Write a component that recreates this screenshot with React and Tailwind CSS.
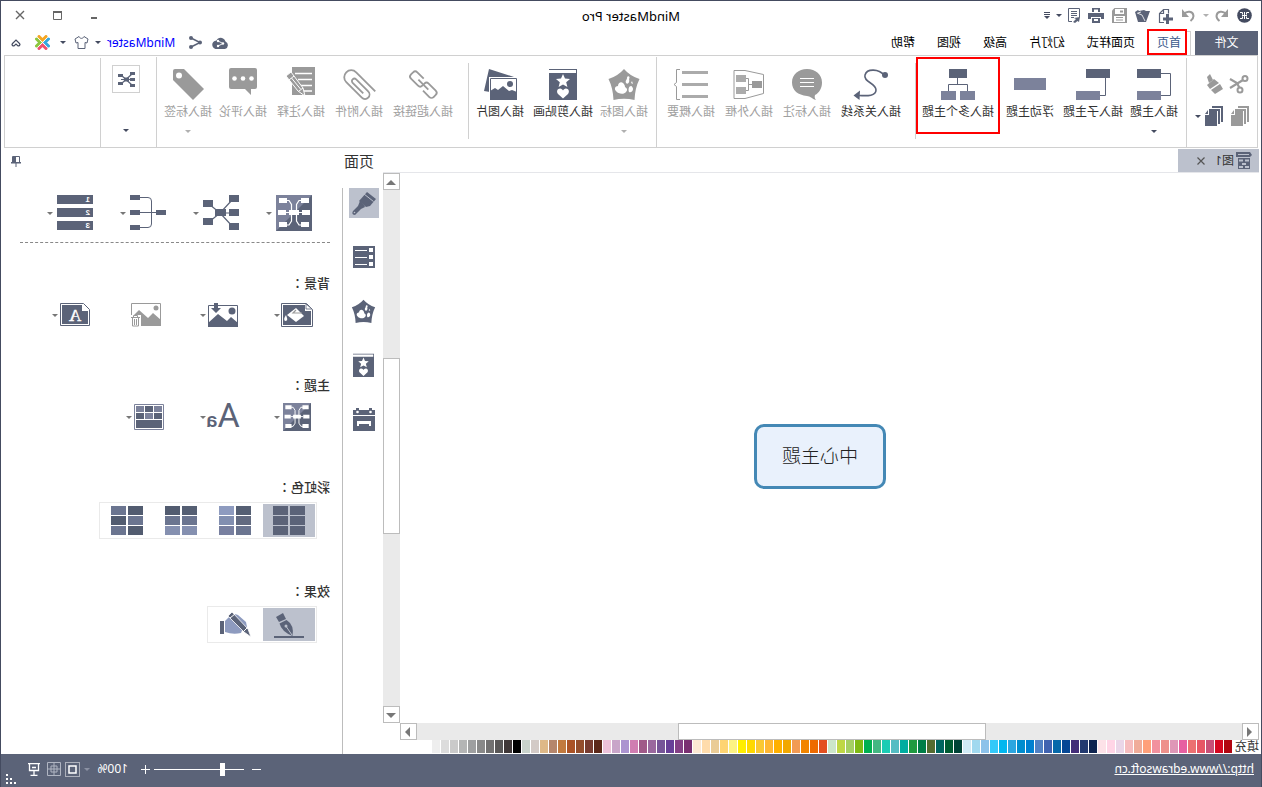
import React from 'react'

const DARK = '#5b6378'
const LIGHT = '#7c829b'
const GRAY = '#9a9a9a'

const swatches = [
  '#b20510', '#d6061f', '#c85077', '#e75565', '#ec7071', '#e75fa1', '#df97b7', '#ee918b', '#f2919e', '#ffa07a',
  '#f0ac99', '#f6bdbf', '#ead6e8', '#ffd5e6', '#fde2e8', '#0f2450', '#22396f', '#432d78', '#054795', '#0669aa',
  '#4063b0', '#5181c4', '#0080d0', '#008dcf', '#2ca6e0', '#00b7ef', '#33c9f9', '#8cc2ea', '#a1d9ef', '#d0ebf5',
  '#004437', '#005c32', '#00655f', '#556b2f', '#007e47', '#1f9a3f', '#00ada0', '#54bdc3', '#1bccb4', '#43b882',
  '#00b050', '#7fba14', '#a5cf63', '#bfd745', '#cce6c9', '#e35020', '#ee6a00', '#f28500', '#f29b54', '#f2a800',
  '#ffb000', '#ffb732', '#fac832', '#ffd900', '#ffee00', '#fdf383', '#fed472', '#eacc97', '#ffdcac', '#fde9d3',
  '#7a3072', '#844086', '#684098', '#765598', '#9a689e', '#a05988', '#d07db1', '#ac94d0', '#c9a5c9', '#edc2da',
  '#5c2819', '#783c30', '#944e2c', '#ab5326', '#c27a3e', '#b5866c', '#deb887', '#d3cac6', '#c9d3cb', '#000000',
  '#403838', '#595757', '#727171', '#898989', '#9e9fa0', '#b4b5b5', '#cacaca', '#dcdcdc', '#eeeeee',
]

const tabs = ['页面样式', '幻灯片', '高级', '视图', '帮助']

function Svg({ w = 36, h = 34, children, ...rest }) {
  return (
    <svg width={w} height={h} viewBox={`0 0 ${w} ${h}`} fill="none" className="shrink-0" aria-hidden="true" {...rest}>
      {children}
    </svg>
  )
}

function Caret({ color = '#444b60' }) {
  return (
    <svg width="6" height="3" viewBox="0 0 6 3" className="shrink-0" aria-hidden="true">
      <path d="M0 0h6L3 3z" fill={color} />
    </svg>
  )
}

/* ribbon icons */

const TopicIcon = () => (
  <Svg>
    <path d="M11 6.500H1.500v22H11" stroke={DARK} />
    <path d="M11 2h24v9H11z" fill={DARK} />
    <path d="M11 24h24v9H11z" fill={LIGHT} />
  </Svg>
)

const SubTopicIcon = () => (
  <Svg>
    <path d="M5.500 11v17.500H11" stroke={DARK} />
    <path d="M1 2h24v9H1z" fill={DARK} />
    <path d="M11 24h24v9H11z" fill={LIGHT} />
  </Svg>
)

const FloatIcon = () => (
  <Svg>
    <path d="M2 11h32v12H2z" fill={LIGHT} />
  </Svg>
)

const MultiIcon = () => (
  <Svg>
    <path d="M18.500 11v6M8.500 24v-6.500h19V24" stroke={DARK} />
    <path d="M9 2h18v9H9z" fill={DARK} />
    <path d="M1 24h15v9H1zM20 24h15v9H20z" fill={LIGHT} />
  </Svg>
)

const RelationIcon = () => (
  <Svg>
    <path d="M5 8C10 2 22 1 24 8c2 7-11 8-11 15 0 6 8 6 17 5.500" stroke={DARK} strokeWidth="1.600" />
    <circle cx="4" cy="8" r="3" fill={DARK} />
    <path d="M29 23.500l6.500 5-6 4.500z" fill={DARK} />
  </Svg>
)

const CalloutIcon = () => (
  <Svg>
    <path d="M18 2c8.500 0 15 5.500 15 13.500S27 28 18 29c-3 0-6 3.500-9 4 1.500-1.500 1.500-3.500 1-5C6 26 3 21.500 3 15.500 3 7.500 9.500 2 18 2z" fill={GRAY} />
    <path d="M11 11.500h14M11 15.500h14M11 19.500h14" stroke="#fff" />
  </Svg>
)

const BoundaryIcon = () => (
  <Svg>
    <path d="M33 3.500H22L3.500 7.500v19l18.500 5h11z" stroke={GRAY} />
    <path d="M15 17.500h3.500M22 11.500h-3.500v12H22" stroke={GRAY} />
    <path d="M5 14h10v7H5z" fill={GRAY} />
    <path d="M21 8h10v7H21zM21 20h10v7H21z" fill="#ababab" />
  </Svg>
)

const SummaryIcon = () => (
  <Svg>
    <path d="M1 4h26v3H1zM1 16h26v3H1zM1 28h26v3H1z" fill="#ababab" />
    <path d="M29 2.500h3.500v13l2.500 2-2.500 2v13H29" stroke={GRAY} />
  </Svg>
)

function Pentagon({ color, w = 36, h = 34 }) {
  return (
    <svg width={w} height={h} viewBox="0 0 36 34" className="shrink-0" aria-hidden="true">
      <path d="M18 2q6 7 15.500 10-4.500 9-5 21-10.500-2.500-21 0Q7 21 2.500 12 12 9 18 2z" fill={color} />
      <path d="M19 16c2-2 5 0 5 3 3 0 4 3 2 5-2 3-8 4-10 1-2-2-1-4 1-5 0-2 1-3 2-4z" fill="#fff" />
      <path d="M13 12c-2-3 2-4 2-1 0 2 2 2 1 5-2 2-4-1-3-4zM11 19c2 0 3 3 2 6-2 1-4-1-4-3 0-1 1-3 2-3zM9 17l1-3 1 2z" fill="#fff" />
    </svg>
  )
}

function ClipArt({ color, w = 36, h = 34 }) {
  return (
    <svg width={w} height={h} viewBox="0 0 36 34" className="shrink-0" aria-hidden="true">
      <path d="M4 2h28v31H4z" fill={color} />
      <path d="M5 3h27v3H5z" fill="#fff" />
      <path d="M18 7l2 4.600 5 .400-3.800 3.300 1.200 4.800L18 17.500 13.600 20l1.200-4.800L11 12l5-.400z" fill="#fff" />
      <path d="M18 31.500l-5-4.500c-2-2.500-.500-5.500 2-5.500 1.500 0 2.500 1 3 2 .500-1 1.500-2 3-2 2.500 0 4 3 2 5.500z" fill="#fff" />
    </svg>
  )
}

const PictureIcon = () => (
  <Svg>
    <path d="M4 10L29 2l5 22-6 1V10z" fill={DARK} />
    <path d="M1 10h28v24H1z" fill="#fff" />
    <path d="M1.500 11.500h26v21h-26z" stroke={DARK} />
    <path d="M1 33V25l5-2 3 1 6-5 5 4 3-2 5 3v9z" fill={DARK} />
    <circle cx="8" cy="17" r="3" fill={DARK} />
  </Svg>
)

const LinkIcon = () => (
  <Svg>
    <g transform="rotate(-45 18 18)" stroke={GRAY} strokeWidth="1.800">
      <path d="M14 22H5a3 3 0 0 1-3-3v-3a3 3 0 0 1 3-3h10a3 3 0 0 1 3 3v1" />
      <path d="M22 13h9a3 3 0 0 1 3 3v3a3 3 0 0 1-3 3H21a3 3 0 0 1-3-3v-1" />
      <path d="M11 17.500h14" />
    </g>
  </Svg>
)

const AttachIcon = () => (
  <Svg>
    <g transform="rotate(45 18 18)" stroke={GRAY} strokeWidth="1.800">
      <path d="M11 34V7a7 7 0 0 1 14 0v22a4.500 4.500 0 0 1-9 0V12a2.500 2.500 0 0 1 5 0v15" />
    </g>
  </Svg>
)

const NoteIcon = () => (
  <Svg>
    <path d="M4 0h23v28H4z" fill={GRAY} />
    <path d="M7 6.500h17M7 12.500h14M7 18.500h11M7 24h8" stroke="#fff" strokeWidth="1.300" />
    <path d="M28 5l5 4-12 15-7 5 2-8z" fill={GRAY} stroke="#fff" />
    <path d="M25 9l5 4M16 21l4 3M27.500 11l-9 11" stroke="#fff" />
  </Svg>
)

const CommentIcon = () => (
  <Svg>
    <path d="M6 1h24q2 0 2 2v17q0 2-2 2H16l-6 6v-6H6q-2 0-2-2V3q0-2 2-2z" fill={GRAY} />
    <circle cx="9.500" cy="11.500" r="2.300" fill="#fff" />
    <circle cx="18" cy="11.500" r="2.300" fill="#fff" />
    <circle cx="26.500" cy="11.500" r="2.300" fill="#fff" />
  </Svg>
)

const TagIcon = () => (
  <Svg>
    <path d="M22 2h9q2 0 2 2v9L13 33 2 22z" fill={GRAY} />
    <circle cx="27" cy="8.500" r="3" fill="#fff" />
  </Svg>
)

const ribbonGroups = [
  {
    className: 'pl-1 w-[271px]',
    items: [
      { label: '插入主题', icon: <TopicIcon />, width: 'w-[56px]', caret: true },
      { label: '插入子主题', icon: <SubTopicIcon />, width: 'w-[66px]' },
      { label: '浮动主题', icon: <FloatIcon />, width: 'w-[60px]' },
      { label: '插入多个主题', icon: <MultiIcon />, width: 'w-[84px]', marked: true },
    ],
  },
  {
    className: 'pl-[9px] w-[259px]',
    items: [
      { label: '插入关系线', icon: <RelationIcon />, width: 'w-[70px]' },
      { label: '插入标注', icon: <CalloutIcon />, width: 'w-[58px]', off: true },
      { label: '插入外框', icon: <BoundaryIcon />, width: 'w-[58px]', off: true },
      { label: '插入概要', icon: <SummaryIcon />, width: 'w-[58px]', off: true },
    ],
  },
  {
    className: 'pl-[3px] w-[188px]',
    items: [
      { label: '插入图标', icon: <Pentagon color={GRAY} />, width: 'w-[58px]', off: true, caret: true },
      { label: '插入剪贴画', icon: <ClipArt color={DARK} />, width: 'w-[64px]' },
      { label: '插入图片', icon: <PictureIcon />, width: 'w-[62px]' },
    ],
  },
  {
    className: 'pl-2.5 w-[312px]',
    items: [
      { label: '插入超链接', icon: <LinkIcon />, width: 'w-[70px]', off: true },
      { label: '插入附件', icon: <AttachIcon />, width: 'w-[58px]', off: true },
      { label: '插入注释', icon: <NoteIcon />, width: 'w-[58px]', off: true },
      { label: '插入评论', icon: <CommentIcon />, width: 'w-[58px]', off: true },
      { label: '插入标签', icon: <TagIcon />, width: 'w-[52px]', off: true, caret: true },
    ],
  },
]

function RibbonItem({ label, icon, width, off, marked, caret }) {
  return (
    <button
      disabled={off}
      className={`${width} ${marked ? 'border-2 border-[#ff0000] h-[77px] pt-2' : 'h-[86px] pt-2.5'} ${off ? 'text-[#a0a0a0]' : 'text-[#333333]'} shrink-0 flex flex-col items-center text-xs whitespace-nowrap`}
    >
      {icon}
      <span className="leading-4 mt-[3px]">{label}</span>
      {caret && <span className="mt-2.5 flex"><Caret color={off ? '#b0b0b0' : '#444b60'} /></span>}
    </button>
  )
}

function TitleBar() {
  return (
    <div className="h-[29px] shrink-0 grid grid-cols-3 items-center">
      <div className="flex items-center pl-[9px]">
        <Svg w={15} h={15}>
          <circle cx="7.500" cy="7.500" r="7.300" fill="#444b60" />
          <path d="M7.500 4v7M5 7.500h5M3 4.500h2.500v2M3 10.500h2.500v-2M12 4.500H9.500v2M12 10.500H9.500v-2" stroke="#fff" />
        </Svg>
        <button aria-label="撤销" className="ml-2">
          <Svg w={14} h={13}>
            <path d="M3 5C6 1.500 12 2 12.500 7c0 2-1 3.500-3 5" stroke={GRAY} strokeWidth="2" />
            <path d="M1 0v8h7z" fill={GRAY} />
          </Svg>
        </button>
        <span className="ml-1.5"><Caret color="#b0b0b0" /></span>
        <button aria-label="恢复" className="ml-2">
          <Svg w={14} h={13}>
            <path d="M11 5C8 1.500 2 2 1.500 7c0 2 1 3.500 3 5" stroke={GRAY} strokeWidth="2" />
            <path d="M13 0v8H6z" fill={GRAY} />
          </Svg>
        </button>
        <button aria-label="新建" className="ml-2">
          <Svg w={15} h={16}>
            <path d="M9 14.500h4.500v-9l-4-4h-5v4M9.500 1.500v4h4" stroke={DARK} strokeWidth="1.200" />
            <path d="M4 6h3v3.500h3v3H7V16H4v-3.500H0v-3h4z" fill={DARK} />
          </Svg>
        </button>
        <button aria-label="打开" className="ml-2">
          <Svg w={15} h={14}>
            <path d="M0 2h4l2-1 5 1 1-1 3 2-3 10H4z" fill={DARK} />
            <path d="M5 12l3-6 5-2M9 3l3 1" stroke="#fff" strokeWidth=".8" />
          </Svg>
        </button>
        <button aria-label="保存" className="ml-2">
          <Svg w={15} h={15}>
            <path d="M0 0h12.500L15 2.500V15H0z" fill={GRAY} />
            <path d="M3 1h9v5H3zM2 8h11v6H2z" fill="#fff" />
            <path d="M4 2.500h3v2H4z" fill={GRAY} />
            <path d="M4 9.500h7M4 12h7" stroke={GRAY} />
          </Svg>
        </button>
        <button aria-label="打印" className="ml-2">
          <Svg w={16} h={15}>
            <path d="M4 0h8v4H4zM0 5h16v6h-3V9H3v2H0zM4 10h8v5H4z" fill={DARK} />
            <path d="M6 11h4v2H6zM6 1.500h4V5H6z" fill="#fff" />
          </Svg>
        </button>
        <button aria-label="导出" className="ml-2">
          <Svg w={12} h={15}>
            <path d="M.500.500h11v13H8M.500.500v9" stroke={DARK} />
            <path d="M3 3.500h6M3 5.500h6M3 7.500h6M6 9.500h3" stroke={DARK} />
            <path d="M7 14L4 11l2-1-6-1 1 5 1.500-1L5 15z" fill={DARK} />
          </Svg>
        </button>
        <span className="ml-1.5"><Caret /></span>
        <button aria-label="自定义" className="ml-1.5">
          <Svg w={6} h={7}>
            <path d="M0 .500h6M0 2.500h6" stroke="#444b60" />
            <path d="M0 4h6L3 7z" fill="#444b60" />
          </Svg>
        </button>
      </div>
      <h1 className="text-center text-[13px] leading-4 text-black">MindMaster Pro</h1>
      <div className="flex items-center justify-end gap-7 pr-3.5">
        <button aria-label="最小化">
          <Svg w={7} h={10}><path d="M0 6h6v2H0z" fill="#666" /></Svg>
        </button>
        <button aria-label="最大化">
          <Svg w={9} h={10}><path d="M.500.500h8v8h-8z" stroke="#666" /><path d="M0 0h9v2H0z" fill="#666" /></Svg>
        </button>
        <button aria-label="关闭">
          <Svg w={10} h={12}><path d="M1 1l8 8M9 1L1 9" stroke="#666" strokeWidth="1.400" /></Svg>
        </button>
      </div>
    </div>
  )
}

function TabRow() {
  return (
    <div className="h-[25px] shrink-0 flex items-stretch px-[3px] text-xs text-black">
      <button className="w-[63px] mt-px bg-[#5b6378] text-white">文件</button>
      <div className="ml-1 mt-px border-l border-t border-[#d0d0d0] pl-[3px]">
        <button className="-mt-[3px] h-[26px] w-10 pr-1 pt-0.5 border-2 border-[#ff0000] text-[#3b5a8c] bg-white flex items-center justify-center">首页</button>
      </div>
      <div className="flex items-center gap-[22px] ml-3">
        {tabs.map((t) => <button key={t}>{t}</button>)}
      </div>
      <div className="ml-auto flex items-center">
        <button aria-label="云">
          <Svg w={17} h={12}>
            <path d="M4 12a4 4 0 0 1-.500-7.500C5 0 11-.500 12.500 3.500 18 4 18 11 13.500 12z" fill={DARK} />
            <path d="M11 4L6 6.500l5 2.500" stroke="#fff" strokeWidth=".9" />
            <circle cx="11" cy="4" r="1.200" fill="#fff" /><circle cx="6" cy="6.500" r="1.200" fill="#fff" /><circle cx="11" cy="9" r="1.200" fill="#fff" />
          </Svg>
        </button>
        <button aria-label="分享" className="ml-2.5">
          <Svg w={13} h={13}>
            <path d="M11 2L2 6.500l9 4.500" stroke={DARK} strokeWidth="1.500" />
            <circle cx="11" cy="2" r="2" fill={DARK} /><circle cx="2" cy="6.500" r="2" fill={DARK} /><circle cx="11" cy="11" r="2" fill={DARK} />
          </Svg>
        </button>
        <button className="ml-3.5 flex items-center gap-1.5 text-xs text-[#0000ff]">MindMaster <Caret /></button>
        <button className="ml-1.5 flex items-center gap-2" aria-label="主题外观">
          <Svg w={15} h={13}>
            <path d="M5 .500L1 3l1 4 2-.500V12.500h7V6.500l2 .500 1-4-4-2.500C9 3 6 3 5 .500z" stroke={DARK} />
          </Svg>
          <Caret />
        </button>
        <a href="#home" aria-label="Edraw" className="ml-2.5">
          <Svg w={15} h={15}>
            <path d="M4 1.500l3.500 3.500L11 1.500" stroke="#f5a623" strokeWidth="3" strokeLinecap="round" />
            <path d="M1.500 4L5 7.500 1.500 11" stroke="#35a8e0" strokeWidth="3" strokeLinecap="round" />
            <path d="M13.500 4L10 7.500l3.500 3.500" stroke="#8cc63f" strokeWidth="3" strokeLinecap="round" />
            <path d="M4 13.500L7.500 10l3.500 3.500" stroke="#f0506e" strokeWidth="3" strokeLinecap="round" />
            <path d="M3 3l9 9M12 3l-9 9" stroke="#fff" strokeWidth=".8" />
          </Svg>
        </a>
        <button aria-label="折叠功能区" className="ml-3.5 mr-[7px]">
          <Svg w={10} h={8}><path d="M1 5l4-4 4 4M1 5q0 2 2 2l2-2 2 2q2 0 2-2" stroke="#444b60" strokeWidth="1.200" /></Svg>
        </button>
      </div>
    </div>
  )
}

function Pages({ color }) {
  return (
    <Svg w={18} h={20}>
      <path d="M0 0h11v2H2v14H0z" fill={color} />
      <path d="M3 3h11v2H5v13H3z" fill={color} />
      <path d="M6 4h8v5h4v11H6z" fill={color} />
      <path d="M15 4l3 4h-3z" fill={color} />
      <path d="M2.500 17V2.500H12" stroke="#fff" strokeWidth=".8" />
    </Svg>
  )
}

function Ribbon() {
  return (
    <div className="h-[93px] shrink-0 mx-[3px] border border-[#d0d0d0] flex">
      <div className="w-[71px] shrink-0 mt-0.5 border-r border-[#d0d0d0] flex flex-col gap-3 pl-2 pt-4">
        <div className="flex gap-1.5">
          <button aria-label="剪切">
            <Svg w={20} h={20}>
              <path d="M6 6L19 14M9.500 14L12 9l7-4" stroke={GRAY} strokeWidth="2.200" />
              <circle cx="4" cy="4.500" r="2.500" stroke={GRAY} strokeWidth="2" />
              <circle cx="9" cy="16" r="2.500" stroke={GRAY} strokeWidth="2" />
            </Svg>
          </button>
          <button aria-label="格式刷">
            <Svg w={18} h={20}>
              <path d="M13 0l3 3-2 6-4-3z" fill={GRAY} />
              <path d="M9 5l7 6-3 4-9-6z" fill={GRAY} />
              <path d="M3 10l9 6-4 4-8-5z" fill={GRAY} />
            </Svg>
          </button>
        </div>
        <div className="flex gap-2">
          <button aria-label="复制"><Pages color={GRAY} /></button>
          <button aria-label="粘贴" className="flex items-center gap-1">
            <Pages color={DARK} />
            <Caret />
          </button>
        </div>
      </div>
      {ribbonGroups.map((g, i) => (
        <div key={i} className={`${g.className} mt-px shrink-0 flex items-start border-[#d0d0d0] ${i % 2 ? 'border-r' : 'justify-between'}`}>
          <div className="flex">
            {g.items.map((item) => <RibbonItem key={item.label} {...item} />)}
          </div>
          {i % 2 === 0 && <span className="mt-1.5 h-[76px] w-px bg-[#d0d0d0]" />}
        </div>
      ))}
      <div className="w-14 pl-1 shrink-0 mt-0.5 border-r border-[#d0d0d0] flex flex-col items-center pt-[7px]">
        <button aria-label="布局" className="size-7 border border-[#d0d0d0] flex items-center justify-center">
          <Svg w={17} h={17}>
            <path d="M3 3l11 10M3 14L14 4M3 8.500h11" stroke={DARK} strokeWidth="1.200" />
            <path d="M0 1h5v3H0zM0 7h5v3H0zM0 13h5v3H0zM12 3h5v3h-5zM12 11h5v3h-5zM6 6.500h5v4H6z" fill={DARK} />
          </Svg>
        </button>
        <button aria-label="更多布局" className="mt-9 h-1 flex"><Caret /></button>
      </div>
      <div className="flex-1" />
    </div>
  )
}

function ScrollButton({ label, d }) {
  return (
    <button aria-label={label} className="size-[17px] shrink-0 border border-[#bcbcbc] bg-white flex items-center justify-center">
      <Svg w={10} h={10}><path d={d} fill="#777" /></Svg>
    </button>
  )
}

function Editor() {
  return (
    <div className="flex-1 min-w-0 flex flex-col pl-0.5">
      <div className="h-[25px] pt-px shrink-0 flex border-b border-[#e5e6ea]">
        <div className="w-[81px] bg-[#bcc1cd] flex items-center text-xs text-[#333] pl-[7px]">
          <Svg w={16} h={17}>
            <path d="M2 0h14v5H2L0 3zM2 6h12v11H2z" fill={DARK} />
            <path d="M3 2.500h11" stroke="#bcc1cd" />
            <path d="M3 7.500h4v2H3zM9 7.500h4v2H9zM6 11h4v2H6zM3 14h4v2H3zM9 14h4v2H9z" fill="#bcc1cd" />
          </Svg>
          <span className="ml-0.5">图1</span>
          <button aria-label="关闭标签" className="ml-2.5">
            <Svg w={8} h={8}><path d="M.500.500l7 7M7.500.500l-7 7" stroke="#555" strokeWidth="1.200" /></Svg>
          </button>
        </div>
      </div>
      <div className="flex-1 flex min-h-0">
        <div className="flex-1 relative">
          <button className="absolute left-[373px] top-[251px] w-[132px] h-[65px] rounded-[10px] border-3 border-[#4488b5] bg-[#e9f1fc] text-[19px] font-light text-[#222]">中心主题</button>
        </div>
        <div className="w-[17px] shrink-0 bg-[#eaeaea] flex flex-col">
          <ScrollButton label="向上" d="M5 3l5 5H0z" />
          <div className="flex-[168]" />
          <div className="flex-[174] bg-white border border-[#bcbcbc]" />
          <div className="flex-[172]" />
          <ScrollButton label="向下" d="M5 8l5-5H0z" />
        </div>
      </div>
      <div className="h-[17px] shrink-0 mr-[17px] bg-[#eaeaea] flex">
        <ScrollButton label="向左" d="M3 5l5-5v10z" />
        <div className="flex-[257]" />
        <div className="flex-[306] bg-white border border-[#bcbcbc]" />
        <div className="flex-[262]" />
        <ScrollButton label="向右" d="M8 5L3 0v10z" />
      </div>
      <div className="h-[14px] shrink-0 flex text-xs text-[#333]">
        <span className="w-[27px] leading-[14px] whitespace-nowrap">填充</span>
        <div className="flex gap-px h-[13px]">
          {swatches.map((c, i) => <button key={i} aria-label={c} className="w-2 shrink-0" style={{ backgroundColor: c }} />)}
        </div>
      </div>
    </div>
  )
}

/* side panel */

const MapTile = ({ w, h }) => (
  <svg width={w} height={h} viewBox="0 0 36 36" fill="none" className="shrink-0" aria-hidden="true">
    <path d="M0 0h36v36H0z" fill={LIGHT} />
    <path d="M0 0v36h36z" fill={DARK} />
    <path d="M10 5.500h3l2.500 4V26l-2.500 4h-3M26 5.500h-3l-2.500 4V26l2.500 4h3M10 17.500h16" stroke="#fff" strokeWidth="1.200" />
    <path d="M3 3h8v5H3zM2 15h8v5H2zM3 27h8v5H3zM25 3h8v5h-8zM26 15h8v5h-8zM25 27h8v5h-8zM13 15h10v5H13z" fill="#fff" />
  </svg>
)

const layouts = [
  <MapTile w={36} h={36} />,
  <Svg w={36} h={36}>
    <path d="M6 4l13 14L6 32M30 9L19 18l11 9M6 18h13" stroke={DARK} strokeWidth="1.200" />
    <path d="M0 0h10v7H0zM0 14h10v7H0zM0 28h10v7H0zM26 5h10v7H26zM26 23h10v7H26zM13 14h11v7H13z" fill={DARK} />
  </Svg>,
  <Svg w={36} h={36}>
    <path d="M10 17.500h16M26 2.500h-8q-3.500 0-3.500 3.500v23q0 3.500 3.500 3.500h8" stroke={DARK} />
    <path d="M0 15h10v5H0zM26 0h10v5H26zM26 15h10v5H26zM26 30h10v5H26z" fill={DARK} />
  </Svg>,
  <Svg w={36} h={36}>
    <path d="M0 0h36v9H0zM0 13h36v9H0zM0 26h36v9H0z" fill={DARK} />
    <g fill="#fff" fontSize="8" fontWeight="bold" fontFamily="Liberation Sans, sans-serif">
      <text x="3" y="7">1</text>
      <text x="3" y="20">2</text>
      <text x="3" y="33">3</text>
    </g>
  </Svg>,
]

const backgrounds = [
  <Svg w={32} h={24}>
    <path d="M6.500.500h25v23H.500v-17z" fill="#fff" stroke={DARK} />
    <path d="M8 2h22v20H2V8h6z" fill={DARK} />
    <path d="M1 6l6-5v5z" fill="#fff" stroke={DARK} strokeWidth=".8" />
    <path d="M17 5l9 7-9 7-8-6z" fill="#fff" /><path d="M11 10h9l-3-3" stroke={GRAY} strokeWidth="1.200" />
    <path d="M27 12q3 4 1 6-3 0-2-3z" fill="#fff" />
  </Svg>,
  <Svg w={30} h={24}>
    <path d="M.500 2.500h29v20H.500z" stroke={DARK} />
    <path d="M0 24v-4l7-6 4 4 9-7 10 9v4z" fill={DARK} />
    <circle cx="6" cy="8" r="3.500" fill={DARK} />
    <path d="M20 0h4v5h3l-5 5-5-5h3z" fill={DARK} />
  </Svg>,
  <Svg w={30} h={24}>
    <path d="M.500.500h29v22H.500z" stroke={GRAY} />
    <path d="M0 23V17l8-7 5 5 9-8 8 8v8z" fill={GRAY} />
    <circle cx="5" cy="5" r="2.500" fill={GRAY} />
    <path d="M20 12h10v12H20z" fill="#fff" />
    <path d="M21 14.500h9M23.500 14v-1.500h4V14M22.500 15v8h6v-8M24.500 16v6M26.500 16v6" stroke={GRAY} />
  </Svg>,
  <Svg w={30} h={24}>
    <path d="M6.500.500h23v22H.500v-16z" fill="#fff" stroke={DARK} />
    <path d="M8 2h20v19H2V8h6z" fill={DARK} />
    <text x="15" y="18" textAnchor="middle" fontSize="17" fontFamily="Liberation Serif, serif" fill="#fff" stroke="#fff" strokeWidth=".4">A</text>
  </Svg>,
]

const themes = [
  <MapTile w={28} h={28} />,
  <span className="flex items-baseline leading-10 font-['Roboto',sans-serif] text-[#5b6378]">
    <span className="text-[34px]">A</span>
    <span className="text-[21px] font-medium">a</span>
  </span>,
  <Svg w={30} h={26}>
    <path d="M.500.500h29v25H.500z" stroke={LIGHT} />
    <path d="M2 2h8v6H2zM20 2h8v6h-8zM11 9h8v6h-8z" fill={LIGHT} />
    <path d="M11 2h8v6h-8zM2 9h8v6H2zM20 9h8v6h-8zM2 16h26v8H2z" fill={DARK} />
  </Svg>,
]

const rainbows = [
  ['#5b6378', '#5b6378', '#5b6378', '#5b6378', '#5b6378', '#5b6378'],
  ['#555f73', '#8e9bbf', '#626a80', '#828fb0', '#6b7590', '#7880a0'],
  ['#555f73', '#525c70', '#6b7590', '#6b7590', '#8590b0', '#8590b0'],
  ['#525c70', '#6b7590', '#6b7590', '#525c70', '#525c70', '#6b7590'],
]

function Section({ title, gap, children }) {
  return (
    <section className={gap}>
      <h3 className="text-[13px] leading-5 font-medium text-[#333]">{title}<span className="font-['Noto_Sans_CJK_TC',sans-serif]">：</span></h3>
      {children}
    </section>
  )
}

function Choice({ active, label, children }) {
  return (
    <button aria-label={label} aria-pressed={active} className={`w-[52px] h-[33px] flex items-center justify-center ${active ? 'bg-[#bcc1cd]' : ''}`}>
      {children}
    </button>
  )
}

function IconRow({ icons, label, noCaret = -1 }) {
  return (
    <div className="flex ml-3.5 mt-2">
      {icons.map((icon, i) => (
        <button key={i} aria-label={`${label} ${i + 1}`} className="w-[74px] h-7 flex items-center">
          <span className={`${i === noCaret ? 'w-11' : 'w-9 pl-0.5'} flex justify-center`}>{icon}</span>
          {i !== noCaret && <Caret color="#777" />}
        </button>
      ))}
    </div>
  )
}

function SidePanel() {
  return (
    <aside className="w-[382px] shrink-0 flex flex-col">
      <div className="h-[25px] shrink-0 flex items-center justify-between pl-[9px] pr-2.5">
        <h2 className="text-[15px] leading-6 text-[#333]">页面</h2>
        <button aria-label="固定" className="pt-0.5">
          <Svg w={10} h={11}>
            <path d="M1.500.500h7v6h-7z" stroke={DARK} /><path d="M5 0h3v7H5zM0 6h10v1.500H0zM4.500 7h1v4h-1z" fill={DARK} />
          </Svg>
        </button>
      </div>
      <div className="flex-1 flex mt-[15px]">
        <nav className="w-[41px] shrink-0 pl-1 flex flex-col gap-6 border-r border-[#bcbcbc]">
          <button aria-label="格式" className="size-[30px] bg-[#bcc1cd] flex items-center justify-center">
            <Svg w={24} h={24}>
              <path d="M9 1l8 9-7 6-4-1L0 8z" fill={DARK} />
              <path d="M2.500 10.500L12 3" stroke="#bcc1cd" />
              <path d="M12 14l4-4 2 5 5 5q2 4-2 4l-6-6-4-2z" fill={DARK} />
              <circle cx="21.500" cy="21.500" r=".8" fill="#bcc1cd" />
            </Svg>
          </button>
          <button aria-label="大纲" className="size-[30px] flex items-center justify-center">
            <Svg w={22} h={22}>
              <path d="M0 0h22v22H0z" fill={DARK} />
              <path d="M2 2h4v4H2zM2 9h4v4H2zM2 16h4v4H2zM8 4h12v1H8zM8 11h12v1H8zM8 18h12v1H8z" fill="#fff" />
            </Svg>
          </button>
          <button aria-label="图标" className="size-[30px] flex items-center justify-center"><Pentagon color={DARK} w={27} h={26} /></button>
          <button aria-label="剪贴画" className="size-[30px] flex items-center justify-center"><ClipArt color={DARK} w={27} h={26} /></button>
          <button aria-label="任务" className="size-[30px] flex items-center justify-center">
            <Svg w={22} h={24}>
              <path d="M0 3h3V1h3v2h10V1h3v2h3v5H0zM0 9h22v15H0z" fill={DARK} />
              <path d="M4 14h14v5h-2v-2H6v2H4z" fill="#fff" />
              <circle cx="4.500" cy="5" r="1.300" fill="#fff" /><circle cx="17.500" cy="5" r="1.300" fill="#fff" />
            </Svg>
          </button>
        </nav>
        <div className="flex-1 pl-3">
          <div className="mr-[19px] h-[55px] border-b border-dashed border-[#888] pl-[18px] pt-[7px] flex">
            {layouts.map((icon, i) => (
              <button key={i} aria-label={`布局 ${i + 1}`} className="w-[73px] h-9 flex items-center gap-1">
                {icon}
                <Caret color="#777" />
              </button>
            ))}
          </div>
          <Section title="背景" gap="mt-[30px]">
            <IconRow icons={backgrounds} label="背景" noCaret={2} />
          </Section>
          <Section title="主题" gap="mt-[46px]">
            <IconRow icons={themes} label="主题" />
          </Section>
          <Section title="彩虹色" gap="mt-[46px]">
            <div className="ml-[13px] mt-[5px] w-fit flex gap-0.5 p-px border border-[#eaeaea]">
              {rainbows.map((colors, i) => (
                <Choice key={i} active={i === 0} label={`彩虹色 ${i + 1}`}>
                  <span className="grid grid-cols-2 gap-x-0.5 gap-y-px pb-px">
                    {colors.map((c, j) => <span key={j} className="w-[15px] h-[9px]" style={{ backgroundColor: c }} />)}
                  </span>
                </Choice>
              ))}
            </div>
          </Section>
          <Section title="效果" gap="mt-[42px]">
            <div className="ml-[13px] mt-[5px] w-fit flex gap-0.5 p-px border border-[#eaeaea]">
              <Choice active label="钢笔">
                <Svg w={30} h={26}>
                  <path d="M0 24h30v2H0z" fill={DARK} />
                  <path d="M21 1l7 4-3 5-7-3z" fill={DARK} />
                  <path d="M17.500 8l7 3.500q-2 8-13 12.500-2-11 6-16z" fill={DARK} />
                  <path d="M12 23l5.500-8" stroke="#bcc1cd" /><circle cx="18" cy="14" r="1.500" fill="#bcc1cd" />
                </Svg>
              </Choice>
              <Choice label="手绘">
                <Svg w={32} h={26}>
                  <path d="M27 9h4v13h-4z" fill={DARK} />
                  <path d="M26 9l-4-4q-5-4-9-2L5 10l-1 5 4 1 2 5q8 2 16-1z" fill="#8e9bbf" />
                  <path d="M19 0l4 4L7 20l-7 5 3-8z" fill={DARK} stroke="#fff" strokeWidth=".8" />
                  <path d="M4 16l4 4M16 2l5 4" stroke="#fff" />
                </Svg>
              </Choice>
            </div>
          </Section>
        </div>
      </div>
    </aside>
  )
}

function StatusBar() {
  return (
    <footer className="h-[33px] pb-[3px] shrink-0 bg-[#5b6378] text-white flex items-center pl-[7px] pr-1">
      <a href="http://www.edrawsoft.cn" className="text-xs underline">http://www.edrawsoft.cn</a>
      <div className="ml-auto flex items-center text-xs">
        <button aria-label="缩小"><Svg w={9} h={9}><path d="M0 4.500h9" stroke="#fff" /></Svg></button>
        <input
          type="range"
          aria-label="缩放"
          defaultValue="22"
          className="appearance-none ml-2 w-[90px] h-px bg-white [&::-webkit-slider-thumb]:appearance-none [&::-webkit-slider-thumb]:w-[5px] [&::-webkit-slider-thumb]:h-[13px] [&::-webkit-slider-thumb]:bg-white"
        />
        <button aria-label="放大" className="ml-1"><Svg w={9} h={9}><path d="M0 4.500h9M4.500 0v9" stroke="#fff" /></Svg></button>
        <span className="ml-[13px] w-8">100%</span>
        <span className="ml-1.5"><Caret color="#8b91a3" /></span>
        <button aria-label="适应页面" className="ml-1">
          <Svg w={15} h={15}><path d="M.500.500h14v14H.500z" stroke="#fff" strokeDasharray="1 1" /><path d="M4 4h7v7H4z" stroke="#fff" strokeWidth="1.500" /></Svg>
        </button>
        <button aria-label="全屏" className="ml-1">
          <Svg w={14} h={14}><path d="M.500.500h13v13H.500zM7 0v14M0 7h14" stroke="#b0b5c2" /><path d="M4 4h6v6H4z" stroke="#b0b5c2" /></Svg>
        </button>
        <button aria-label="演示" className="ml-[7px]">
          <Svg w={12} h={13}><path d="M0 .500h12M1.500 1v6.500h9V1M6 8v4M2.500 12.500h7M4 4.500h4" stroke="#fff" strokeWidth="1.300" /></Svg>
        </button>
        <span className="ml-3 self-end -mb-2">
          <Svg w={11} h={11}><path d="M8 0h2v2H8zM4 4h2v2H4zM8 4h2v2H8zM0 8h2v2H0zM4 8h2v2H4zM8 8h2v2H8z" fill="#fff" /></Svg>
        </span>
      </div>
    </footer>
  )
}

// The window is drawn right-to-left as a mirror image, so only the root is flipped.
function App() {
  return (
    <div className="-scale-x-100 h-screen flex flex-col bg-white border border-b-0 border-[#444b60] overflow-hidden font-['Noto_Sans','Noto_Sans_CJK_SC',sans-serif]">
      <TitleBar />
      <TabRow />
      <Ribbon />
      <div className="flex-1 min-h-0 flex">
        <Editor />
        <SidePanel />
      </div>
      <StatusBar />
    </div>
  )
}

export default App
